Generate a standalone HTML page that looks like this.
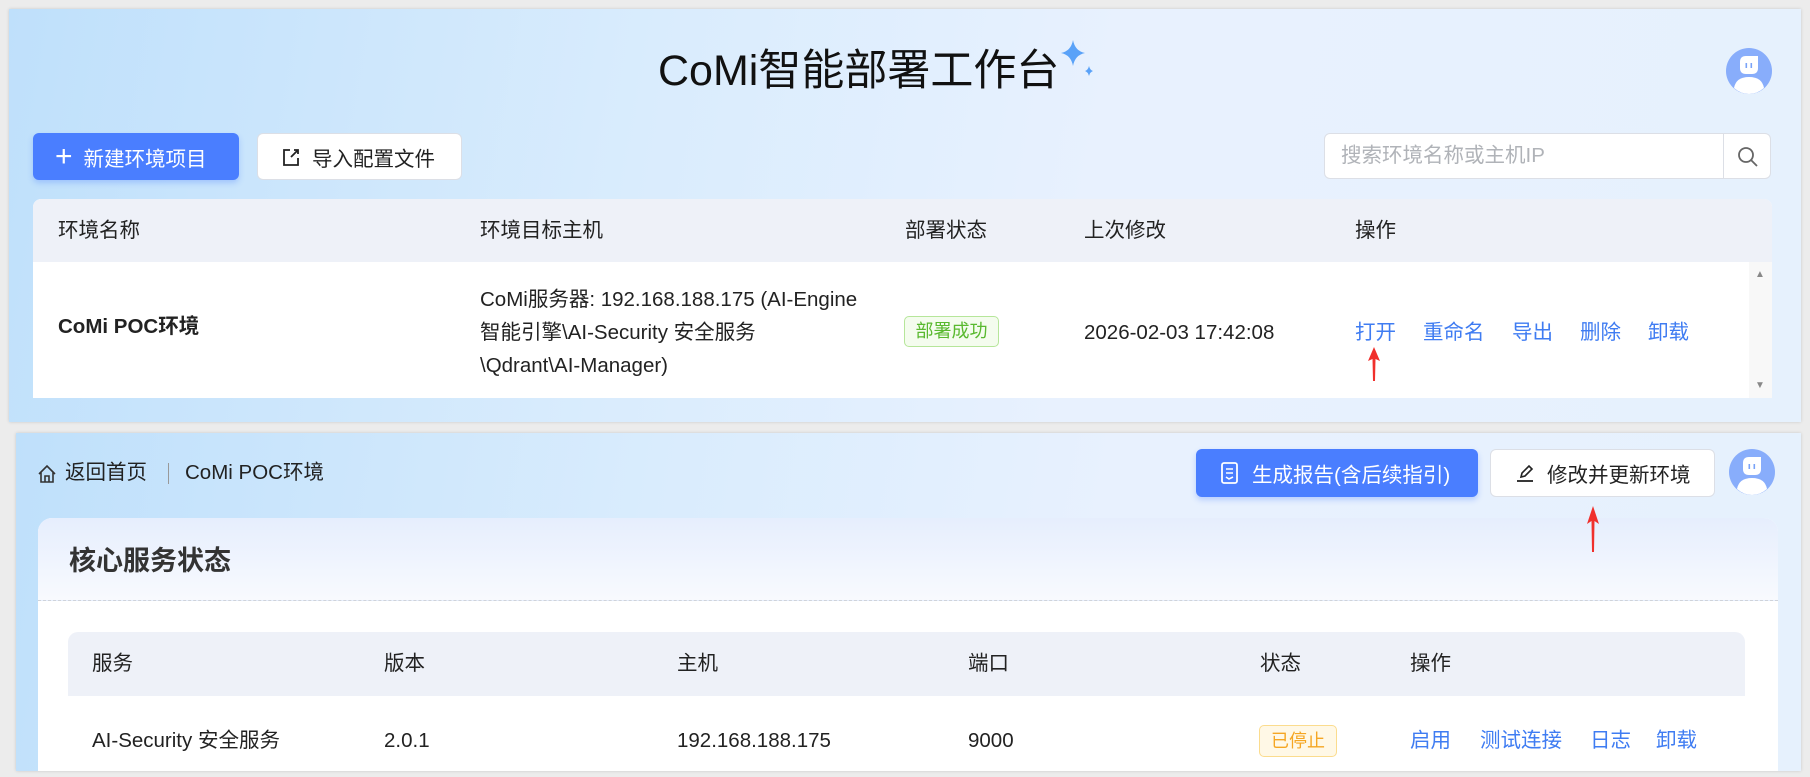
<!DOCTYPE html>
<html><head><meta charset="utf-8">
<style>
*{margin:0;padding:0;box-sizing:border-box}
body{width:1810px;height:777px;overflow:hidden;background:#ececec;font-family:"Liberation Sans","Noto Sans CJK SC",sans-serif;color:#222;position:relative}
.abs{position:absolute}
.panel{position:absolute;background:linear-gradient(100deg,#bfe0fb 0%,#d9ecfd 35%,#e8f1fe 60%,#e6f1fd 100%);box-shadow:0 0 3px rgba(0,0,0,.15)}
.t{position:absolute;white-space:nowrap;font-size:20.5px;line-height:1}
.blue{color:#3f7cf2}
.btn{position:absolute;border-radius:6px;display:flex;align-items:center;font-size:20.5px}
</style></head><body>
<!-- top panel -->
<div class="panel" style="left:9px;top:9px;width:1792px;height:413px"></div>
<div class="t" style="left:658px;top:50px;font-size:43px;color:#111">CoMi智能部署工作台</div>
<svg class="abs" style="left:1058px;top:39px" width="40" height="42" viewBox="0 0 40 42">
<path d="M15 1 Q17 12 27 14 Q17 16 15 27 Q13 16 3 14 Q13 12 15 1Z" fill="#5aa2f8"/>
<path d="M31 27 Q32 31 35 32 Q32 33 31 37 Q30 33 27 32 Q30 31 31 27Z" fill="#5aa2f8"/>
</svg>
<svg class="abs" style="left:1726px;top:48px" width="46" height="46" viewBox="0 0 46 46">
<circle cx="23" cy="23" r="23" fill="#88adfb"/>
<path d="M14 14 Q14 8 20 8 L32 8 L32 20 Q32 26 26 26 L20 26 Q14 26 14 20Z" fill="#fff"/>
<rect x="19.5" y="15" width="1.6" height="5" fill="#7aa3f8"/><rect x="24.5" y="15" width="1.6" height="5" fill="#7aa3f8"/>
<path d="M8 40 Q10 29 23 29 Q36 29 38 40 Q31 46 23 46 Q15 46 8 40Z" fill="#fff"/>
</svg>
<div class="btn" style="left:33px;top:133px;width:206px;height:47px;background:#4a7eff;color:#fff;box-shadow:0 3px 6px rgba(74,126,255,.3)">
<span style="font-size:30px;font-weight:300;margin:0 11px 0 22px;line-height:1">+</span>新建环境项目</div>
<div class="btn" style="left:257px;top:133px;width:205px;height:47px;background:#fff;border:1px solid #dcdfe6;color:#222">
<svg style="margin:0 12px 0 24px" width="18" height="20" viewBox="0 0 18 20"><path d="M8 3 H2 V18 H16 V11" fill="none" stroke="#222" stroke-width="1.8"/><path d="M9 10 L16 3 M12 3 H16 V7" fill="none" stroke="#222" stroke-width="1.8"/></svg>导入配置文件</div>
<div class="abs" style="left:1324px;top:133px;width:447px;height:46px;background:#fff;border:1px solid #dcdfe6;border-radius:6px"></div>
<div class="abs" style="left:1723px;top:133px;width:1px;height:46px;background:#dcdfe6"></div>
<div class="t" style="left:1341px;top:146px;color:#b0b3b8">搜索环境名称或主机IP</div>
<svg class="abs" style="left:1736px;top:145px" width="24" height="24" viewBox="0 0 24 24"><circle cx="10" cy="10" r="7" fill="none" stroke="#666" stroke-width="1.8"/><path d="M15 15 L21 21" stroke="#666" stroke-width="1.8"/></svg>
<div class="abs" style="left:33px;top:199px;width:1739px;height:199px;background:#fff;border-radius:8px 8px 0 0;overflow:hidden">
<div style="height:63px;background:#eef1f8"></div></div>
<div class="abs" style="left:1749px;top:262px;width:23px;height:136px;background:#f8f8f8"></div>
<div class="t" style="left:1755px;top:270px;font-size:10px;color:#888">▲</div>
<div class="t" style="left:1755px;top:381px;font-size:10px;color:#888">▼</div>
<div class="t" style="left:58px;top:221px">环境名称</div>
<div class="t" style="left:480px;top:221px">环境目标主机</div>
<div class="t" style="left:905px;top:221px">部署状态</div>
<div class="t" style="left:1084px;top:221px">上次修改</div>
<div class="t" style="left:1355px;top:221px">操作</div>
<div class="t" style="left:58px;top:317px;font-weight:bold">CoMi POC环境</div>
<div class="t" style="left:480px;top:290px">CoMi服务器: 192.168.188.175 (AI-Engine</div>
<div class="t" style="left:480px;top:323px">智能引擎\AI-Security 安全服务</div>
<div class="t" style="left:480px;top:356px">\Qdrant\AI-Manager)</div>
<div class="abs" style="left:904px;top:316px;width:95px;height:31px;background:#f4fcee;border:1px solid #b6e69a;border-radius:5px;color:#59b92f;font-size:18px;text-align:center;line-height:29px">部署成功</div>
<div class="t" style="left:1084px;top:323px">2026-02-03 17:42:08</div>
<div class="t blue" style="left:1355px;top:323px">打开</div>
<div class="t blue" style="left:1423px;top:323px">重命名</div>
<div class="t blue" style="left:1512px;top:323px">导出</div>
<div class="t blue" style="left:1580px;top:323px">删除</div>
<div class="t blue" style="left:1648px;top:323px">卸载</div>
<svg class="abs" style="left:1367px;top:347px" width="14" height="34" viewBox="0 0 14 34"><path d="M7 0 L13 14 L8.5 12 L8 34 L6 34 L5.5 12 L1 14Z" fill="#f0302c"/></svg>

<!-- bottom panel -->
<div class="panel" style="left:16px;top:433px;width:1785px;height:338px"></div>
<svg class="abs" style="left:37px;top:464px" width="20" height="20" viewBox="0 0 20 20"><path d="M2 10 L10 2 L18 10 M4 8 V18 H16 V8 M8 18 V12 H12 V18" fill="none" stroke="#333" stroke-width="1.6"/></svg>
<div class="t" style="left:65px;top:463px">返回首页</div>
<div class="abs" style="left:168px;top:463px;width:1px;height:21px;background:#999"></div>
<div class="t" style="left:185px;top:463px">CoMi POC环境</div>
<div class="btn" style="left:1196px;top:449px;width:282px;height:48px;background:#4a7eff;color:#fff;box-shadow:0 3px 6px rgba(74,126,255,.3)">
<svg style="margin:0 14px 0 25px" width="17" height="22" viewBox="0 0 17 22"><rect x="1" y="1" width="15" height="20" rx="2" fill="none" stroke="#fff" stroke-width="1.8"/><path d="M5 7 H12 M5 11 H12 M5 15 L8 17 L12 15" fill="none" stroke="#fff" stroke-width="1.6"/></svg>生成报告(含后续指引)</div>
<div class="btn" style="left:1490px;top:449px;width:225px;height:48px;background:#fff;border:1px solid #dcdfe6;color:#222">
<svg style="margin:0 12px 0 24px" width="20" height="20" viewBox="0 0 20 20"><path d="M6 14 L7 10 L14 3 L17 6 L10 13Z" fill="none" stroke="#222" stroke-width="1.6"/><path d="M2 18 H18" stroke="#222" stroke-width="1.8"/></svg>修改并更新环境</div>
<svg class="abs" style="left:1729px;top:449px" width="46" height="46" viewBox="0 0 46 46">
<circle cx="23" cy="23" r="23" fill="#88adfb"/>
<path d="M14 14 Q14 8 20 8 L32 8 L32 20 Q32 26 26 26 L20 26 Q14 26 14 20Z" fill="#fff"/>
<rect x="19.5" y="15" width="1.6" height="5" fill="#7aa3f8"/><rect x="24.5" y="15" width="1.6" height="5" fill="#7aa3f8"/>
<path d="M8 40 Q10 29 23 29 Q36 29 38 40 Q31 46 23 46 Q15 46 8 40Z" fill="#fff"/>
</svg>
<div class="abs" style="left:38px;top:518px;width:1740px;height:253px;background:#fff;border-radius:14px 14px 0 0;overflow:hidden">
<div style="height:83px;background:linear-gradient(180deg,#e6eefd,#f8fafe);border-bottom:1px dashed #cfd3da"></div></div>
<svg class="abs" style="left:1586px;top:506px;z-index:5" width="14" height="46" viewBox="0 0 14 46"><path d="M7 0 L13 18 L8.5 15 L8 46 L6 46 L5.5 15 L1 18Z" fill="#f0302c"/></svg>
<div class="t" style="left:69px;top:548px;font-size:27px;font-weight:bold;color:#333">核心服务状态</div>
<div class="abs" style="left:68px;top:632px;width:1677px;height:64px;background:#eef1f8;border-radius:10px 10px 0 0"></div>
<div class="t" style="left:92px;top:654px">服务</div>
<div class="t" style="left:384px;top:654px">版本</div>
<div class="t" style="left:677px;top:654px">主机</div>
<div class="t" style="left:968px;top:654px">端口</div>
<div class="t" style="left:1260px;top:654px">状态</div>
<div class="t" style="left:1410px;top:654px">操作</div>
<div class="t" style="left:92px;top:731px">AI-Security 安全服务</div>
<div class="t" style="left:384px;top:731px">2.0.1</div>
<div class="t" style="left:677px;top:731px">192.168.188.175</div>
<div class="t" style="left:968px;top:731px">9000</div>
<div class="abs" style="left:1259px;top:725px;width:78px;height:32px;background:#fff8e6;border:1px solid #fbdc8e;border-radius:5px;color:#f5a623;font-size:18px;text-align:center;line-height:30px">已停止</div>
<div class="t blue" style="left:1410px;top:731px">启用</div>
<div class="t blue" style="left:1480px;top:731px">测试连接</div>
<div class="t blue" style="left:1590px;top:731px">日志</div>
<div class="t blue" style="left:1656px;top:731px">卸载</div>
</body></html>
